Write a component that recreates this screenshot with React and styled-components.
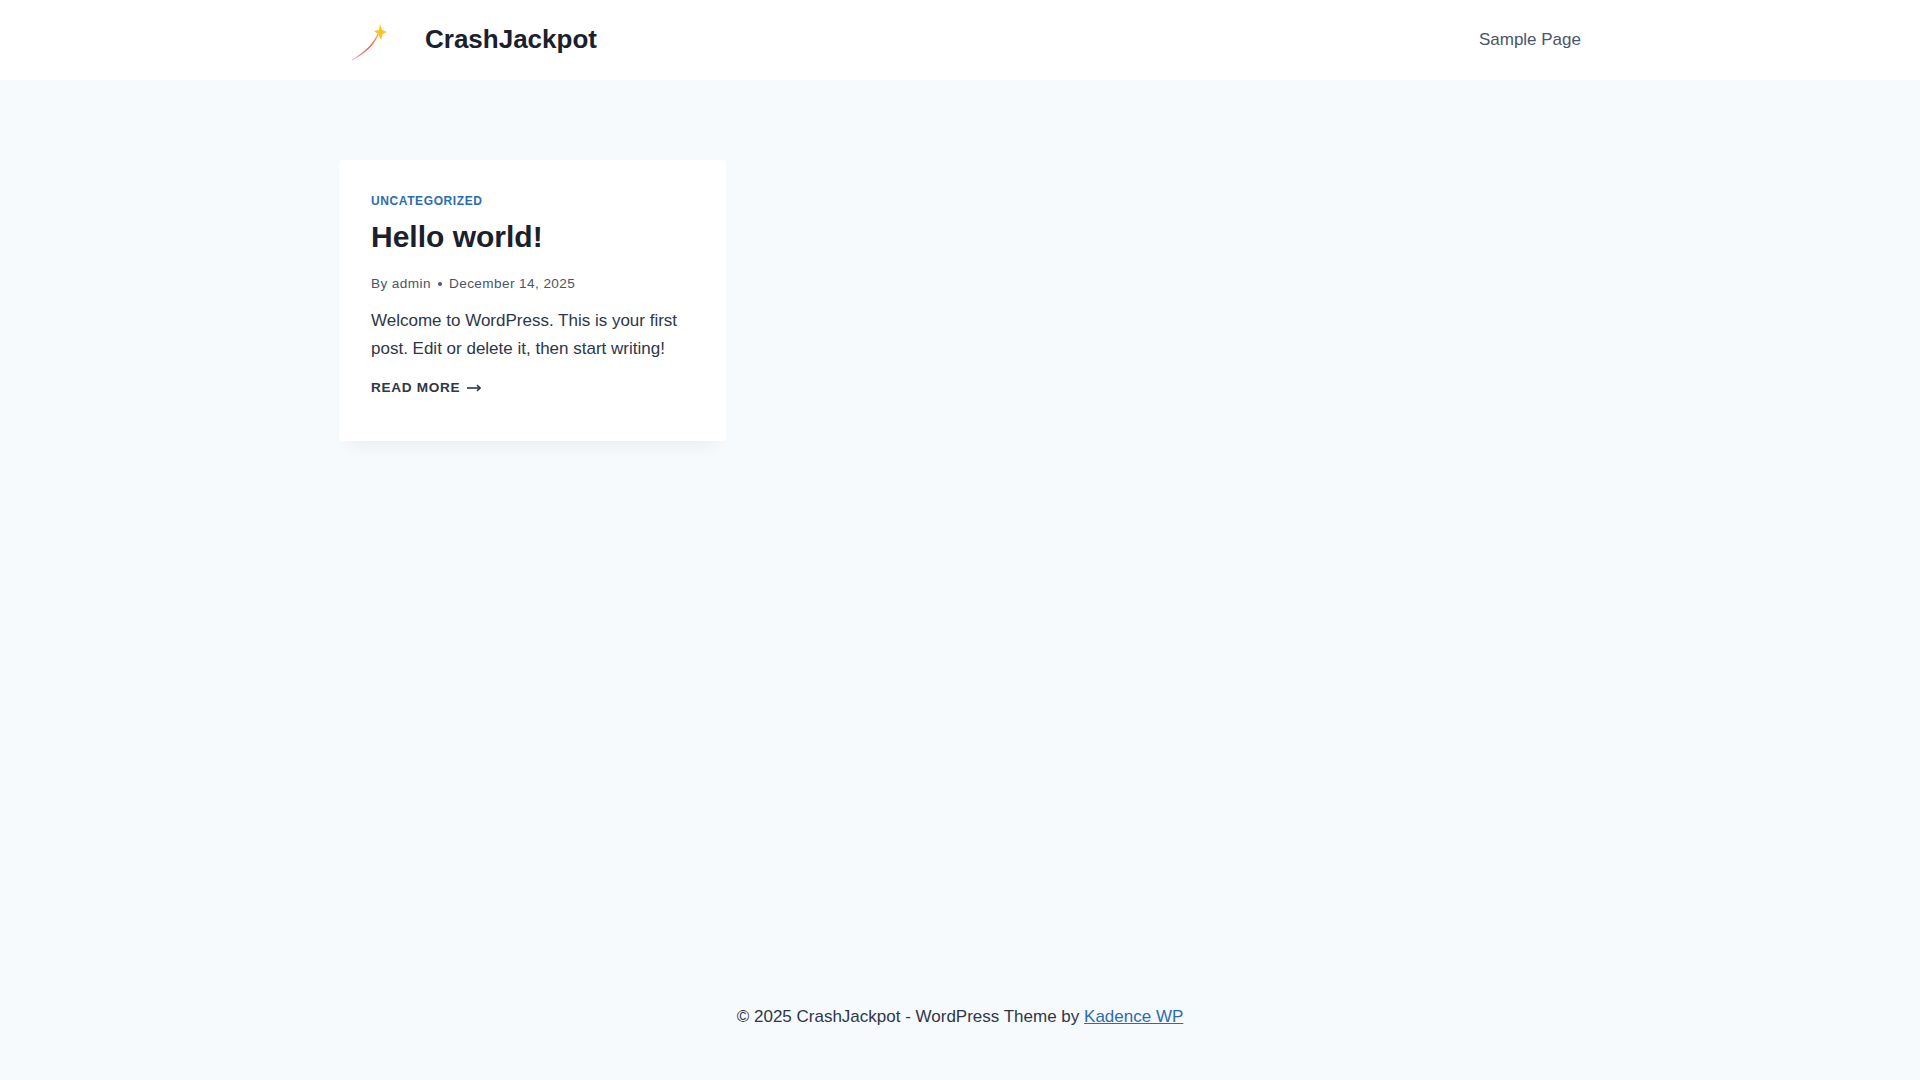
import React from "react";
import styled, { createGlobalStyle } from "styled-components";

const GlobalStyle = createGlobalStyle`
  html, body { margin: 0; padding: 0; }
  body {
    background: #f7fafc;
    color: #2d3748;
    font-family: "Liberation Sans", Arial, sans-serif;
    font-size: 17px;
    line-height: 1.6;
  }
  * { box-sizing: border-box; }
`;

const Page = styled.div`
  min-height: 1080px;
  display: flex;
  flex-direction: column;
`;

const Header = styled.header`
  background: #fff;
  height: 80px;
`;

const Container = styled.div`
  width: 1290px;
  margin: 0 auto;
  padding: 0 24px;
  height: 100%;
  display: flex;
  align-items: center;
  justify-content: space-between;
`;

const Brand = styled.a`
  display: flex;
  align-items: center;
  gap: 16px;
  color: #1a202c;
  font-size: 26px;
  font-weight: 700;
  text-decoration: none;
`;

const NavLink = styled.a`
  color: #4a5568;
  font-size: 17px;
  text-decoration: none;
`;

const Main = styled.main`
  flex: 1;
  width: 1290px;
  margin: 0 auto;
  padding: 80px 24px 0;
`;

const Card = styled.article`
  width: 387px;
  height: 281px;
  padding: 32px;
  background: #fff;
  border-radius: 4px;
  box-shadow: 0 15px 15px -10px rgba(0, 0, 0, 0.05);
`;

const Category = styled.a`
  display: block;
  color: #2b6cb0;
  font-size: 12px;
  font-weight: 700;
  letter-spacing: 0.05em;
  line-height: 18px;
  text-transform: uppercase;
`;

const Title = styled.h2`
  margin: 4px 0 0;
  color: #1a202c;
  font-size: 30px;
  font-weight: 700;
  line-height: 1.5;
`;

const Meta = styled.div`
  display: flex;
  align-items: center;
  margin-top: 14px;
  color: #4a5568;
  font-size: 13.6px;
  letter-spacing: 0.03em;
`;

const Dot = styled.span`
  width: 4px;
  height: 4px;
  margin: 0 7px;
  border-radius: 50%;
  background: #4a5568;
`;

const Excerpt = styled.p`
  margin: 12px 0 0;
  font-size: 17px;
  line-height: 28px;
  color: #2d3748;
`;

const ReadMore = styled.a`
  display: flex;
  align-items: center;
  gap: 7px;
  margin-top: 14px;
  color: #2d3748;
  font-size: 13.6px;
  font-weight: 700;
  letter-spacing: 0.05em;
  text-transform: uppercase;
`;

const Footer = styled.footer`
  height: 100px;
  text-align: center;
  font-size: 17px;
  color: #2d3748;
  padding-top: 23px;
`;

const FooterLink = styled.a`
  color: #2b6cb0;
  text-decoration: underline;
`;

function Logo() {
  return (
    <svg width="70" height="52" viewBox="0 0 70 52" fill="none">
      <defs>
        <linearGradient id="tail" x1="13" y1="44" x2="42" y2="18" gradientUnits="userSpaceOnUse">
          <stop offset="0" stopColor="#ef5350" stopOpacity="0.3" />
          <stop offset="0.5" stopColor="#f4544f" />
          <stop offset="1" stopColor="#fbb040" />
        </linearGradient>
      </defs>
      <path d="M13 46 C26 38 34 31 40 18 C36 30 28 38 13 46 Z" fill="url(#tail)" stroke="url(#tail)" strokeWidth="0.8" />
      <path d="M41 10 L43 16 L48 18 L43.5 20 L42 26 L39.5 20 L35 17 L40 16 Z" fill="#fcc21b" />
    </svg>
  );
}

function Arrow() {
  return (
    <svg width="14" height="8" viewBox="0 0 14 8" fill="none" stroke="currentColor" strokeWidth="1.6">
      <path d="M0 4 H13" />
      <path d="M10 1.2 L13.2 4 L10 6.8" />
    </svg>
  );
}

export default function App() {
  return (
    <Page>
      <GlobalStyle />
      <Header>
        <Container>
          <Brand>
            <Logo />
            CrashJackpot
          </Brand>
          <NavLink>Sample Page</NavLink>
        </Container>
      </Header>
      <Main>
        <Card>
          <Category>Uncategorized</Category>
          <Title>Hello world!</Title>
          <Meta>
            By admin
            <Dot />
            December 14, 2025
          </Meta>
          <Excerpt>Welcome to WordPress. This is your first post. Edit or delete it, then start writing!</Excerpt>
          <ReadMore>
            Read more
            <Arrow />
          </ReadMore>
        </Card>
      </Main>
      <Footer>
        © 2025 CrashJackpot - WordPress Theme by <FooterLink>Kadence WP</FooterLink>
      </Footer>
    </Page>
  );
}
